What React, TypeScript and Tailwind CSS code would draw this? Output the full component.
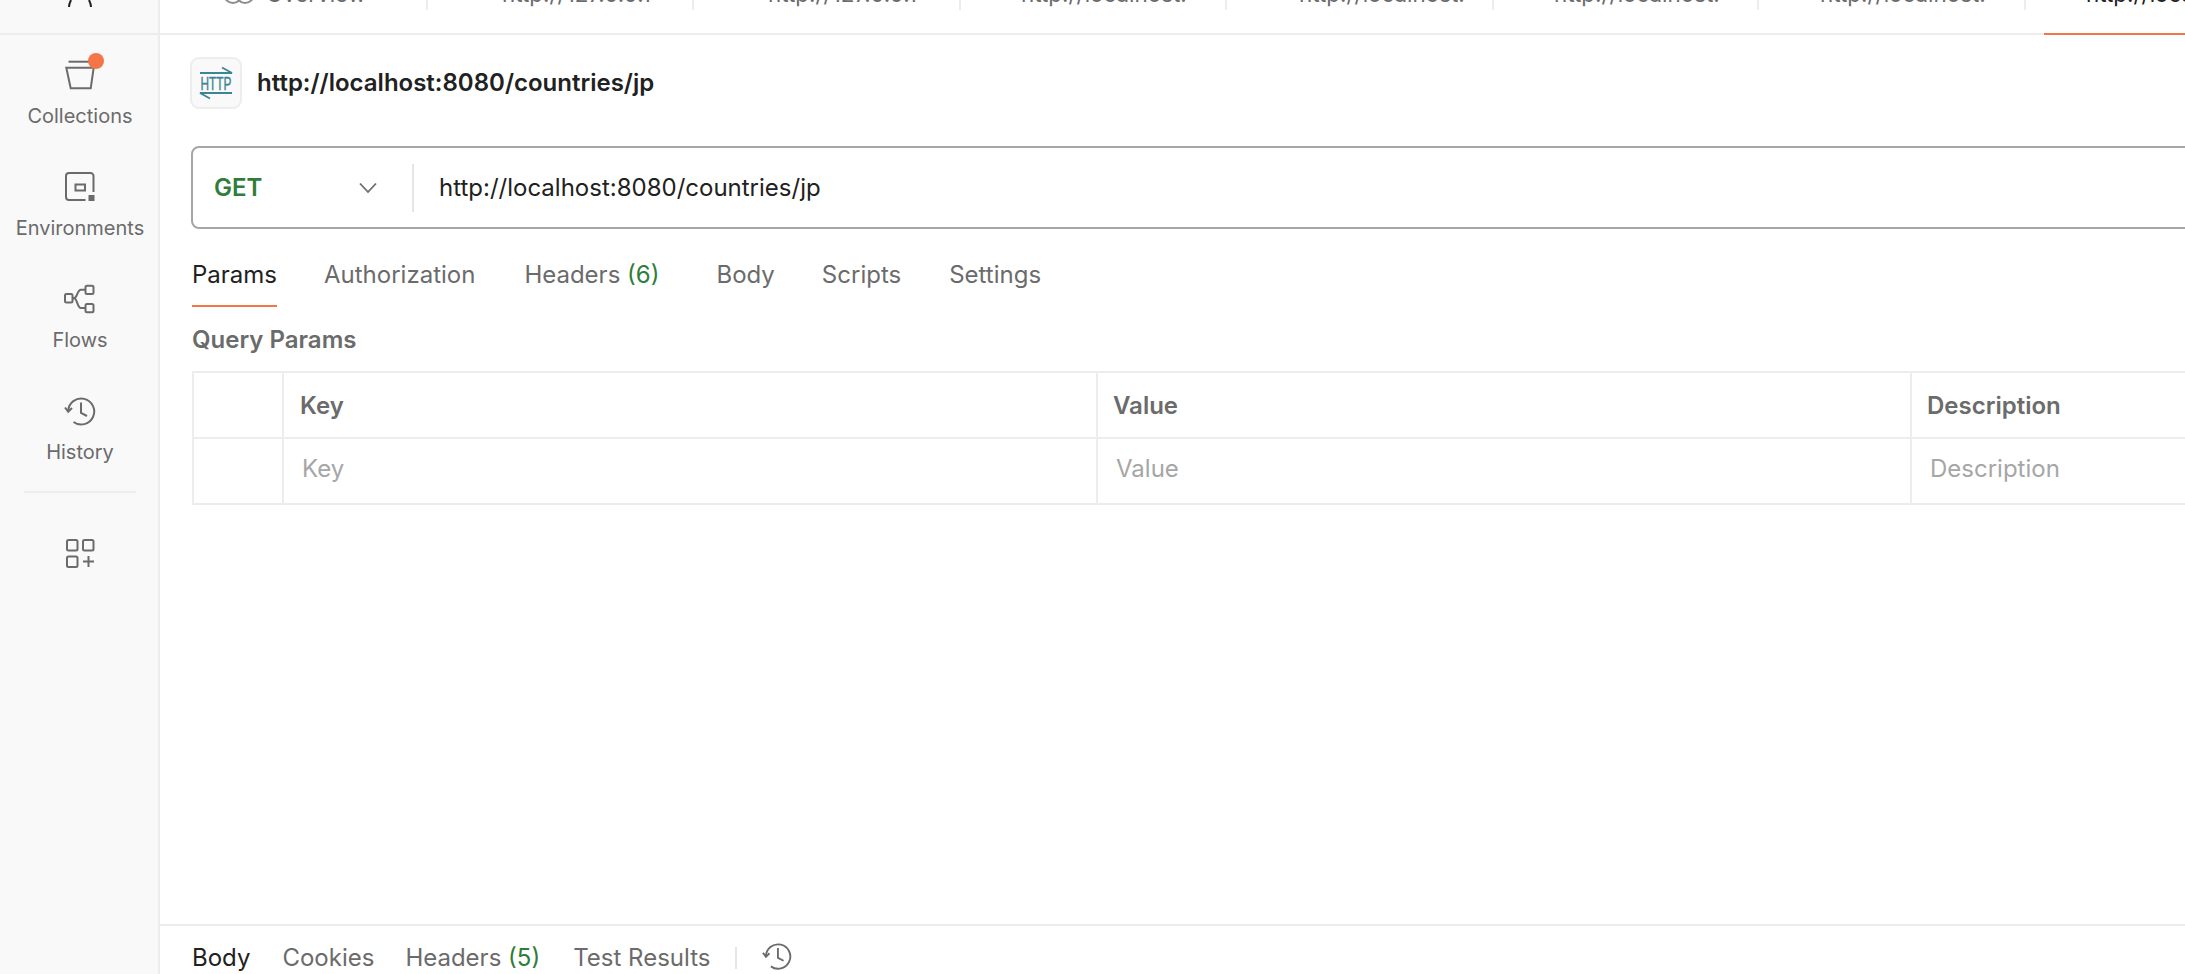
const ICON_STROKE = "#6b6b6b";

const OPEN_TABS = [
  { label: "Overview", width: "w-[268px]", pad: "pl-[63px]", overview: true },
  { label: "http://127.0.0.1", width: "w-[266px]", pad: "pl-[74px]" },
  { label: "http://127.0.0.1", width: "w-[267px]", pad: "pl-[74px]" },
  { label: "http://localhost:", width: "w-[266px]", pad: "pl-[60px]" },
  { label: "http://localhost:", width: "w-[267px]", pad: "pl-[72px]" },
  { label: "http://localhost:", width: "w-[265px]", pad: "pl-[60px]" },
  { label: "http://localhost:", width: "w-[267px]", pad: "pl-[61px]" },
];

function CollectionsIcon() {
  return (
    <svg width="32" height="32" viewBox="0 0 32 32" fill="none" stroke={ICON_STROKE} strokeWidth="2">
      <path d="M4.5 1.7H28" />
      <path d="M2.3 7.7H29.7L26.7 28.3H6.7Z" />
    </svg>
  );
}

function EnvironmentsIcon() {
  return (
    <svg width="32" height="32" viewBox="0 0 32 32" fill="none" stroke={ICON_STROKE} strokeWidth="2">
      <path d="M29.5 20V4a3 3 0 0 0-3-3H5a3 3 0 0 0-3 3v21a3 3 0 0 0 3 3h16.5" />
      <rect x="11.5" y="12.5" width="9.5" height="6" />
      <rect x="24.5" y="23" width="6" height="6" fill={ICON_STROKE} stroke="none" />
    </svg>
  );
}

function FlowsIcon() {
  return (
    <svg width="32" height="32" viewBox="0 0 32 32" fill="none" stroke={ICON_STROKE} strokeWidth="2">
      <rect x="1" y="10" width="7.5" height="8.5" rx="1.5" />
      <rect x="21.5" y="1.8" width="8" height="8.2" rx="1.5" />
      <rect x="21.5" y="20" width="8" height="8.2" rx="1.5" />
      <path d="M8.5 14.2H10C13.5 14.2 13 5.8 17 5.8H21.5" />
      <path d="M8.5 14.2H10C13.5 14.2 13 24 17 24H21.5" />
    </svg>
  );
}

function HistoryIcon({ size = 32 }: { size?: number }) {
  return (
    <svg width={size} height={size} viewBox="0 0 32 32" fill="none" stroke={ICON_STROKE} strokeWidth="2">
      <path d="M4.2 15A13 13 0 1 1 9.5 26" />
      <path d="M1 11.5 4.2 15.8 8 12" />
      <path d="M17 6.5V17L23 20" />
    </svg>
  );
}

function AppsIcon() {
  return (
    <svg width="32" height="32" viewBox="0 0 32 32" fill="none" stroke={ICON_STROKE} strokeWidth="2">
      <rect x="3" y="3" width="10.5" height="10.5" rx="1.5" />
      <rect x="19" y="3" width="10.5" height="10.5" rx="1.5" />
      <rect x="3" y="19.5" width="10.5" height="10.5" rx="1.5" />
      <path d="M19 24.5H30M24.5 19V30" />
    </svg>
  );
}

function HttpIcon() {
  return (
    <svg width="36" height="36" viewBox="0 0 36 36" fill="none" stroke="#3d8494" strokeWidth="1.8">
      <path d="M2 8H34L24 2.5" />
      <path d="M34 28H2L12 33.5" />
      <text
        x="18"
        y="24.5"
        textAnchor="middle"
        textLength="31"
        lengthAdjust="spacingAndGlyphs"
        fill="#3d8494"
        strokeWidth="0.4"
        fontSize="18"
        fontFamily="'Liberation Sans', sans-serif"
      >
        HTTP
      </text>
    </svg>
  );
}

function OverviewIcon() {
  return (
    <svg width="32" height="20" viewBox="0 0 32 20" fill="none" stroke="#8c8c8c" strokeWidth="2" className="mr-[11px] shrink-0">
      <circle cx="10" cy="10" r="9" />
      <circle cx="22" cy="10" r="9" />
    </svg>
  );
}

const NAV_ITEMS = [
  { label: "Collections", icon: <CollectionsIcon />, badge: true },
  { label: "Environments", icon: <EnvironmentsIcon /> },
  { label: "Flows", icon: <FlowsIcon /> },
  { label: "History", icon: <HistoryIcon /> },
];

function Sidebar() {
  return (
    <aside className="w-[160px] h-full shrink-0 bg-[#f9f9f9] border-r-2 border-[#ededed] flex flex-col">
      <div className="h-[35px] shrink-0 border-b-2 border-[#ededed] overflow-hidden flex justify-center pl-[2px]">
        <svg width="32" height="8" viewBox="0 0 32 8" fill="none" stroke="#212121" strokeWidth="2">
          <path d="M5 7C5 4 6 2 7 0M27 7C27 4 26 2 25 0" />
        </svg>
      </div>
      {NAV_ITEMS.map((item) => (
        <div key={item.label} className="h-[112px] pt-[25px] pl-[2px] flex flex-col items-center">
          <div className="relative w-[32px] h-[32px]">
            {item.icon}
            {item.badge && (
              <span className="absolute left-[24px] top-[-7px] w-[16px] h-[16px] rounded-full bg-[#f37548]" />
            )}
          </div>
          <span className="mt-[12px] text-[20px] leading-[24px] text-[#6b6b6b] whitespace-nowrap">
            {item.label}
          </span>
        </div>
      ))}
      <div className="mt-[8px] ml-[24px] mr-[22px] h-[2px] bg-[#ededed]" />
      <div className="mt-[44px] pl-[2px] flex justify-center">
        <AppsIcon />
      </div>
    </aside>
  );
}

function OpenTabs() {
  return (
    <div className="shrink-0">
      <div className="h-[33px] overflow-hidden">
        <div className="flex -mt-[34px]">
          {OPEN_TABS.map((tab) => (
            <div
              key={tab.label + tab.width + tab.pad}
              className={`${tab.width} ${tab.pad} h-[44px] pt-[12px] shrink-0 border-r-2 border-[#ededed] flex items-center text-[22.4px] leading-[24px] text-[#6b6b6b] whitespace-nowrap`}
            >
              {tab.overview && <OverviewIcon />}
              {tab.label}
            </div>
          ))}
          <div className="pl-[60px] h-[44px] pt-[12px] shrink-0 flex items-center text-[22.4px] leading-[24px] text-[#212121] whitespace-nowrap">
            http://localhost:
          </div>
        </div>
      </div>
      <div className="flex h-[2px]">
        <div className="flex-1 bg-[#ededed]" />
        <div className="w-[141px] bg-[#f37548]" />
      </div>
    </div>
  );
}

function UrlBar() {
  return (
    <div className="mt-[37px] ml-[31px] w-[2100px] h-[83px] shrink-0 border-2 border-[#a6a6a6] rounded-[8px] flex items-center">
      <span className="ml-[21px] w-[144px] text-[24px] font-semibold text-[#2e7d3a]">GET</span>
      <svg width="20" height="12" viewBox="0 0 20 12" fill="none" stroke={ICON_STROKE} strokeWidth="1.8">
        <path d="M2 1.5 10 10 18 1.5" />
      </svg>
      <div className="ml-[34px] w-[2px] h-[48px] bg-[#e6e6e6]" />
      <span className="ml-[25px] text-[24px] text-[#212121] whitespace-nowrap">
        http://localhost:8080/countries/jp
      </span>
    </div>
  );
}

function RequestTabs() {
  return (
    <div className="ml-[32px] h-[78px] shrink-0 flex items-start text-[24px] leading-[30px] text-[#6b6b6b] whitespace-nowrap">
      <div className="w-[85px] h-[78px] pt-[31px] border-b-2 border-[#f37548] text-[#212121]">Params</div>
      <div className="ml-[47px] pt-[31px]">Authorization</div>
      <div className="ml-[49px] pt-[31px]">
        Headers <span className="text-[#2e7d3a]">(6)</span>
      </div>
      <div className="ml-[57px] pt-[31px]">Body</div>
      <div className="ml-[47px] pt-[31px]">Scripts</div>
      <div className="ml-[48px] pt-[31px]">Settings</div>
    </div>
  );
}

const CELL = "border-l-2 border-[#ededed] flex items-center whitespace-nowrap";

function ParamsTable() {
  return (
    <div className="shrink-0">
      <p className="ml-[32px] mt-[19px] text-[24px] leading-[28px] font-semibold text-[#6b6b6b]">Query Params</p>
      <div className="ml-[32px] mt-[17px] w-[2100px] border-y-2 border-r-2 border-[#ededed] grid grid-cols-[90px_814px_814px_1fr] grid-rows-[64px_66px] text-[24px]">
        <div className={CELL} />
        <div className={`${CELL} pl-[16px] pt-[2px] font-semibold text-[#6b6b6b]`}>Key</div>
        <div className={`${CELL} pl-[15px] pt-[2px] font-semibold text-[#6b6b6b]`}>Value</div>
        <div className={`${CELL} pl-[15px] pt-[2px] font-semibold text-[#6b6b6b]`}>Description</div>
        <div className={`${CELL} border-t-2`} />
        <div className={`${CELL} border-t-2 pl-[18px] pb-[5px] font-normal text-[#a6a6a6]`}>Key</div>
        <div className={`${CELL} border-t-2 pl-[18px] pb-[5px] font-normal text-[#a6a6a6]`}>Value</div>
        <div className={`${CELL} border-t-2 pl-[18px] pb-[5px] font-normal text-[#a6a6a6]`}>Description</div>
      </div>
    </div>
  );
}

function ResponseBar() {
  return (
    <div className="h-[50px] shrink-0 border-t-2 border-[#ededed] pl-[32px] flex items-start text-[24px] leading-[30px] text-[#6b6b6b] whitespace-nowrap">
      <span className="mt-[17px] text-[#212121]">Body</span>
      <span className="mt-[17px] ml-[32px]">Cookies</span>
      <span className="mt-[17px] ml-[31px]">
        Headers <span className="text-[#2e7d3a]">(5)</span>
      </span>
      <span className="mt-[17px] ml-[33px]">Test Results</span>
      <div className="mt-[21px] ml-[25px] w-[2px] h-[22px] bg-[#e6e6e6]" />
      <div className="mt-[16px] ml-[25px]">
        <HistoryIcon size={30} />
      </div>
    </div>
  );
}

export default function App() {
  return (
    <div className="w-full h-screen overflow-hidden flex bg-white font-[Inter,sans-serif]">
      <Sidebar />
      <main className="flex-1 min-w-0 h-full overflow-hidden flex flex-col">
        <OpenTabs />
        <div className="mt-[22px] ml-[30px] flex items-center shrink-0">
          <div className="w-[52px] h-[52px] rounded-[9px] border-2 border-[#ededed] bg-[#f9f9f9] flex items-center justify-center">
            <HttpIcon />
          </div>
          <h1 className="ml-[15px] text-[24px] font-semibold text-[#212121] whitespace-nowrap">
            http://localhost:8080/countries/jp
          </h1>
        </div>
        <UrlBar />
        <RequestTabs />
        <ParamsTable />
        <div className="flex-1" />
        <ResponseBar />
      </main>
    </div>
  );
}
